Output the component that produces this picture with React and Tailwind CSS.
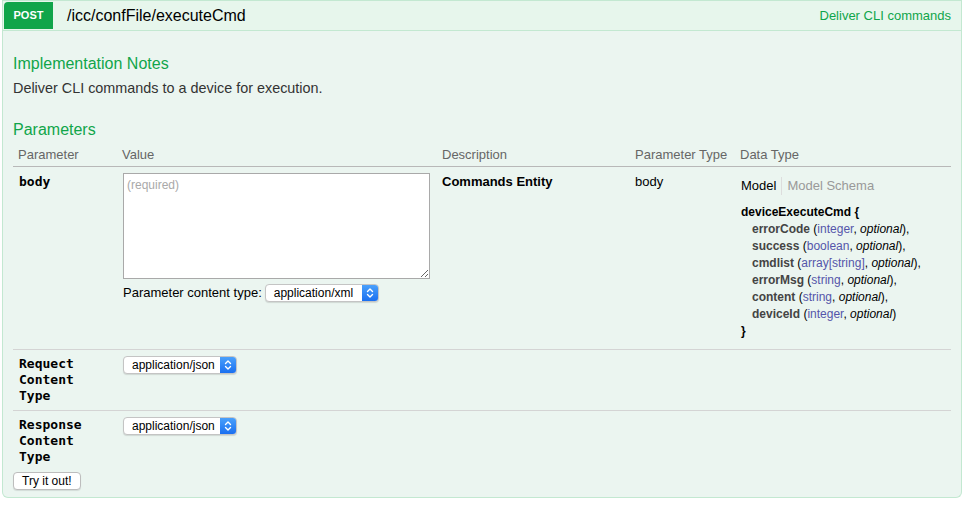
import React from 'react';

const fields = [
  { name: 'errorCode', type: 'integer' },
  { name: 'success', type: 'boolean' },
  { name: 'cmdlist', type: 'array[string]' },
  { name: 'errorMsg', type: 'string' },
  { name: 'content', type: 'string' },
  { name: 'deviceId', type: 'integer' },
];

const MacSelect = ({ value, width }) => (
  <div
    className="flex h-[18px] items-stretch rounded-[4px] border border-[#c4c4c4] bg-white shadow-[0_1px_1px_rgba(0,0,0,0.12)] overflow-hidden"
    style={{ width }}
  >
    <span className="flex-1 pl-[8px] text-[12px] leading-[16px] text-black">{value}</span>
    <span className="flex w-[16px] items-center justify-center bg-gradient-to-b from-[#4aa0fb] to-[#1a6ff0]">
      <svg width="8" height="12" viewBox="0 0 8 12" fill="none" stroke="white" strokeWidth="1.4" strokeLinecap="round" strokeLinejoin="round">
        <path d="M1.5 4.5 L4 2 L6.5 4.5" />
        <path d="M1.5 7.5 L4 10 L6.5 7.5" />
      </svg>
    </span>
  </div>
);

const App = () => {
  const mono = { fontFamily: '"DejaVu Sans Mono", monospace' };
  return (
    <div className="w-[966px] h-[505px] bg-white pl-[2px] pr-[4px]" style={{ fontFamily: '"Liberation Sans", Arial, sans-serif' }}>
      <div className="flex h-[31px] items-center border border-[#c3e8d1] bg-[#e7f6ec]">
        <div className="ml-[1px] flex h-[27px] w-[49px] items-center justify-center rounded-tl-[4px] bg-[#10a54a] text-[11px] font-bold text-white">
          POST
        </div>
        <div className="ml-[14px] text-[16px] text-black">/icc/confFile/executeCmd</div>
        <div className="ml-auto mr-[10px] text-[13px] text-[#10a54a]">Deliver CLI commands</div>
      </div>

      <div className="h-[467px] rounded-b-[6px] border border-t-0 border-[#c3e8d1] bg-[#ebf5f0] px-[10px] pt-[23px]">
        <div className="text-[16px] leading-[20px] text-[#10a54a]">Implementation Notes</div>
        <div className="mt-[5px] text-[14.4px] leading-[18px] text-[#333]">Deliver CLI commands to a device for execution.</div>

        <div className="mt-[23px] text-[16px] leading-[20px] text-[#10a54a]">Parameters</div>

        <div className="mt-[6px] w-[938px]">
          <div className="grid grid-cols-[105px_319px_193px_105px_1fr] border-b border-[#b8b8b8] pb-[2px] text-[13px] leading-[18px] text-[#666]">
            <div className="pl-[5px]">Parameter</div>
            <div className="pl-[4px]">Value</div>
            <div className="pl-[5px]">Description</div>
            <div className="pl-[5px]">Parameter Type</div>
            <div className="pl-[5px]">Data Type</div>
          </div>

          <div className="grid grid-cols-[105px_319px_193px_105px_1fr] border-b border-[#d4d4d4] pt-[6px] pb-[9px]">
            <div className="pl-[6px] pt-[1px] text-[13px] font-bold leading-[16px] text-black" style={mono}>body</div>
            <div className="pl-[5px]">
              <textarea
                className="block h-[106px] w-[307px] border border-[#a9a9a9] bg-white px-[3px] py-[2px] text-[12px] text-black placeholder:text-[#a9a9a9]"
                placeholder="(required)"
              />
              <div className="mt-[4px] flex items-center text-[13px] text-black">
                <span>Parameter content type:</span>
                <span className="ml-[3px]"><MacSelect value="application/xml" width={114} /></span>
              </div>
            </div>
            <div className="pl-[5px] pt-[1px] text-[13px] font-bold leading-[16px] text-black">Commands Entity</div>
            <div className="pl-[5px] pt-[1px] text-[13px] leading-[16px] text-black">body</div>
            <div className="pl-[6px] pt-[4px]">
              <div className="flex items-center text-[13px] leading-[16px]">
                <span className="text-black">Model</span>
                <span className="mx-[5px] h-[18px] w-px bg-[#ddd]" />
                <span className="text-[#999]">Model Schema</span>
              </div>
              <div className="mt-[9px] text-[12px] leading-[17px] text-black">
                <div className="font-bold">deviceExecuteCmd {'{'}</div>
                {fields.map((f, i) => (
                  <div key={f.name} className="pl-[11px]">
                    <span className="font-bold text-[#444]">{f.name}</span>{' '}
                    (<span className="text-[#55a]">{f.type}</span>, <span className="italic">optional</span>){i < fields.length - 1 ? ',' : ''}
                  </div>
                ))}
                <div className="font-bold">{'}'}</div>
              </div>
            </div>
          </div>

          <div className="grid grid-cols-[105px_1fr] border-b border-[#d4d4d4] pt-[6px] pb-[6px]">
            <div className="pl-[6px] text-[13px] font-bold leading-[16px] text-black" style={mono}>
              Requect<br />Content<br />Type
            </div>
            <div className="pl-[5px]"><MacSelect value="application/json" width={114} /></div>
          </div>

          <div className="grid grid-cols-[105px_1fr] pt-[6px]">
            <div className="pl-[6px] text-[13px] font-bold leading-[16px] text-black" style={mono}>
              Response<br />Content<br />Type
            </div>
            <div className="pl-[5px]"><MacSelect value="application/json" width={114} /></div>
          </div>
        </div>

        <button className="mt-[7px] h-[18px] rounded-[4px] border border-[#bdbdbd] bg-white px-[8px] text-[12px] leading-[16px] text-black shadow-[0_1px_1px_rgba(0,0,0,0.1)]">
          Try it out!
        </button>
      </div>
    </div>
  );
};

export default App;
